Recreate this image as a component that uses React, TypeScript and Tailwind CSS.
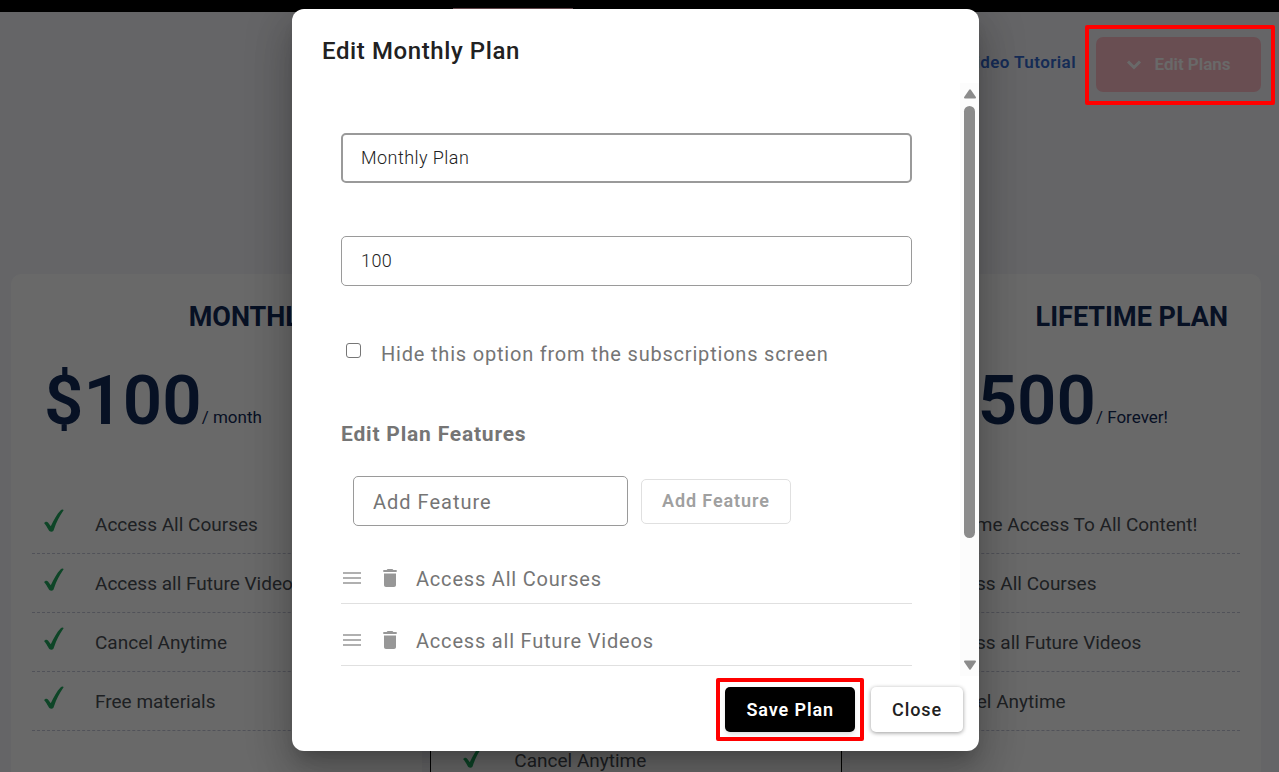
import React, { useState } from 'react';

type Plan = {
    id: number
    name?: string
    price?: string
    period?: string
    features: string[]
    popular?: boolean
}

const PLANS: Plan[] = [
    {
        id: 1,
        name: 'MONTHLY PLAN',
        price: '$100',
        period: '/ month',
        features: ['Access All Courses', 'Access all Future Videos', 'Cancel Anytime', 'Free materials'],
    },
    {
        id: 2,
        features: ['', '', '', '', 'Cancel Anytime'],
        popular: true,
    },
    {
        id: 3,
        name: 'LIFETIME PLAN',
        price: '$1,500',
        period: '/ Forever!',
        features: ['Lifetime Access To All Content!', 'Access All Courses', 'Access all Future Videos', 'Cancel Anytime'],
    },
];

const CheckIcon = () => (
    <svg className="mb-2 h-6 w-5 shrink-0" viewBox="0 0 20 24" fill="#22a860" aria-hidden="true">
        <path d="M.2 14.200C.8 12.600 3 12.200 4 13.600L6.800 17.300C9.600 11 13 5 16.500 1.400C17.500.5 19.500.3 19.600 1.200C15.500 7 12.400 13 10 20.200C9.400 22 8.800 22.700 7.400 22.700C6 22.700 5.300 22.200 4.500 20.800C3 18 2 16 .2 14.200Z" />
    </svg>
);

const DragIcon = () => (
    <svg className="mb-0.5 h-3 w-[18px]" viewBox="0 0 18 12" stroke="#979797" strokeWidth="1.3" aria-hidden="true">
        <path d="M0 1H18M0 6H18M0 11H18" />
    </svg>
);

const TrashIcon = () => (
    <svg className="mb-0.5 h-[18px] w-[14px]" viewBox="0 0 14 18" fill="#979797" aria-hidden="true">
        <path d="M1 4.500H13V16C13 17.100 12.200 18 11 18H3C1.800 18 1 17.100 1 16ZM.3 1H3.600L4.600 0H9.400L10.400 1H13.700V3H.3Z" />
    </svg>
);

const PlanCard: React.FC<{ plan: Plan }> = ({ plan }) => (
    <section className={'flex-1 rounded-[10px] bg-white px-5 ' + (plan.popular ? 'border border-black' : 'border border-white')}>
        <h2 className="mt-6 h-9 pr-3 text-right text-[27px] leading-9 font-bold text-[#122a57]">{plan.name}</h2>
        <div className="mt-[26px] flex h-20 items-end pl-3 text-[#122a57]">
            <span className="text-[69px] leading-[80px] font-semibold">{plan.price}</span>
            <span className="text-[17px] leading-[48px]">{plan.period}</span>
        </div>
        <ul className="mt-[54px]">
            {
                plan.features.map((item, index) => (
                    <li key={index} className="flex h-[59px] items-center border-b border-dashed border-[#c4c8d8] pt-0.5 pl-3 text-[19px] whitespace-nowrap text-[#4a4f55]">
                        <CheckIcon />
                        <span className="ml-[31px]">{item}</span>
                    </li>
                ))
            }
        </ul>
    </section>
);

const ScrollBar = () => (
    <div className="flex w-[19px] shrink-0 flex-col items-center bg-[#fcfcfc] py-1.5" aria-hidden="true">
        <svg className="mb-[7px] h-[10px] w-3 shrink-0" viewBox="0 0 12 10" fill="#8b8b8b"><path d="M5.200.7Q6-.3 6.800.7L11.800 8Q12.400 9.500 11 9.500H1Q-.4 9.500.2 8Z" /></svg>
        <div className="min-h-0 w-full flex-1">
            <div className="mx-auto h-[78%] w-[11px] rounded-full bg-[#8b8b8b]" />
        </div>
        <svg className="h-[10px] w-3 shrink-0" viewBox="0 0 12 10" fill="#8b8b8b"><path d="M5.200 9.300Q6 10.300 6.800 9.300L11.800 2Q12.400.5 11 .5H1Q-.4.5.2 2Z" /></svg>
    </div>
);

const EditPlanDialog = () => {
    const [name, setName] = useState('Monthly Plan');
    const [price, setPrice] = useState('100');
    const [hidden, setHidden] = useState(false);
    const [feature, setFeature] = useState('');
    const [features, setFeatures] = useState(['Access All Courses', 'Access all Future Videos']);

    const onAddFeature = () => {
        setFeatures([...features, feature]);
        setFeature('');
    };

    return (
        <div role="dialog" aria-labelledby="dialog-title" className="flex h-full w-full max-w-[687px] flex-col rounded-xl bg-white shadow-[0_11px_15px_-7px_rgba(0,0,0,0.2),0_24px_38px_3px_rgba(0,0,0,0.14),0_9px_46px_8px_rgba(0,0,0,0.12)]">
            <h1 id="dialog-title" className="px-[30px] pt-[26px] pb-4 text-2xl tracking-wide font-medium text-[#212121]">Edit Monthly Plan</h1>
            <div className="flex min-h-0 flex-1">
                <div className="min-w-0 flex-1 overflow-hidden pt-[50px] pr-12 pl-[49px] tracking-wider text-[#757575]">
                    <input
                        type="text"
                        aria-label="Plan name"
                        autoFocus
                        value={name}
                        onChange={e => setName(e.target.value)}
                        className="block h-[50px] w-full rounded-[5px] border-2 border-[#9a9a9a] px-[18px] pb-0.5 text-lg tracking-wide font-light text-[#212121] outline-none" />
                    <input
                        type="text"
                        aria-label="Plan price"
                        value={price}
                        onChange={e => setPrice(e.target.value)}
                        className="mt-[53px] block h-[50px] w-full rounded-[5px] border border-[#9a9a9a] px-[19px] pb-0.5 text-lg tracking-wide font-light text-[#212121] outline-none" />
                    <label className="mt-[54px] flex items-start pl-[5px] text-xl">
                        <input
                            type="checkbox"
                            checked={hidden}
                            onChange={e => setHidden(e.target.checked)}
                            className="mt-[3px] mr-5 size-[15px] appearance-none rounded-[3px] border border-[#767676] bg-white checked:bg-black" />
                        Hide this option from the subscriptions screen
                    </label>
                    <h2 className="mt-[52px] text-[21px] leading-7 font-bold">Edit Plan Features</h2>
                    <div className="mt-7 flex items-center gap-[13px] pl-3">
                        <input
                            type="text"
                            aria-label="Add Feature"
                            placeholder="Add Feature"
                            value={feature}
                            onChange={e => setFeature(e.target.value)}
                            className="h-[50px] w-[275px] rounded-[5px] border border-[#9a9a9a] px-[19px] pt-0.5 text-xl tracking-wider outline-none placeholder:text-[#757575]" />
                        <button
                            disabled={!feature}
                            onClick={onAddFeature}
                            className="h-[45px] rounded-[5px] border border-[#e0e0e0] px-5 text-lg tracking-wider font-semibold text-[#a0a0a0]">
                            Add Feature
                        </button>
                    </div>
                    <ul className="mt-4">
                        {
                            features.map((item, index) => (
                                <li key={index} className="flex h-[62px] items-center border-b border-[#e0e0e0] pt-3 pl-0.5 text-xl">
                                    <DragIcon />
                                    <button
                                        aria-label={'Delete ' + item}
                                        onClick={() => setFeatures(features.filter((_, i) => i != index))}
                                        className="mr-[19px] ml-[22px]">
                                        <TrashIcon />
                                    </button>
                                    {item}
                                </li>
                            ))
                        }
                    </ul>
                </div>
                <ScrollBar />
            </div>
            <div className="flex justify-end gap-4 px-4 pt-[11px] pb-[19px] text-lg tracking-wider">
                <div className="relative">
                    <button className="h-[45px] rounded-[5px] bg-black px-[21px] font-semibold text-white shadow-md">Save Plan</button>
                    <div className="pointer-events-none absolute -inset-[9px] rounded-xs border-4 border-[#ff0000]" />
                </div>
                <button className="h-[45px] rounded-[5px] bg-white px-[21px] font-medium text-[#212121] shadow-[0_1px_4px_rgba(0,0,0,0.4)]">Close</button>
            </div>
        </div>
    );
};

const App = () => {
    return (
        <div className="relative h-screen overflow-hidden bg-[#f4f6fb] font-[Roboto,sans-serif]">
            <div className="flex h-3 items-end bg-black pl-[453px]">
                <div className="h-1 w-[120px] bg-[#ffbec8]" />
            </div>
            <div className="flex items-center justify-end gap-5 pt-[25px] pr-[18px]">
                <a href="#" className="pb-1 text-[17px] tracking-wide font-semibold text-[#3569cf]">Video Tutorial</a>
                <button className="flex h-[55px] w-[165px] items-center justify-center gap-3 rounded-[7px] bg-[#ffbec8] text-[17px] font-semibold text-white">
                    <svg className="h-[10px] w-4" viewBox="0 0 16 10" fill="none" stroke="currentColor" strokeWidth="3" aria-hidden="true"><path d="M2 1.500L8 7.500L14 1.500" /></svg>
                    Edit Plans
                </button>
            </div>
            <div className="mt-[182px] flex h-[600px] gap-2 pr-[18px] pl-[11px]">
                {PLANS.map(plan => <PlanCard key={plan.id} plan={plan} />)}
            </div>

            <div className="absolute inset-0 flex justify-center bg-black/59 pt-[9px] pr-2 pb-[21px]">
                <EditPlanDialog />
            </div>
            {/* highlight around the Edit Plans button */}
            <div className="pointer-events-none absolute top-[25px] right-1 h-20 w-[190px] rounded-xs border-4 border-[#ff0000]" />
        </div>
    );
}

export default App;
